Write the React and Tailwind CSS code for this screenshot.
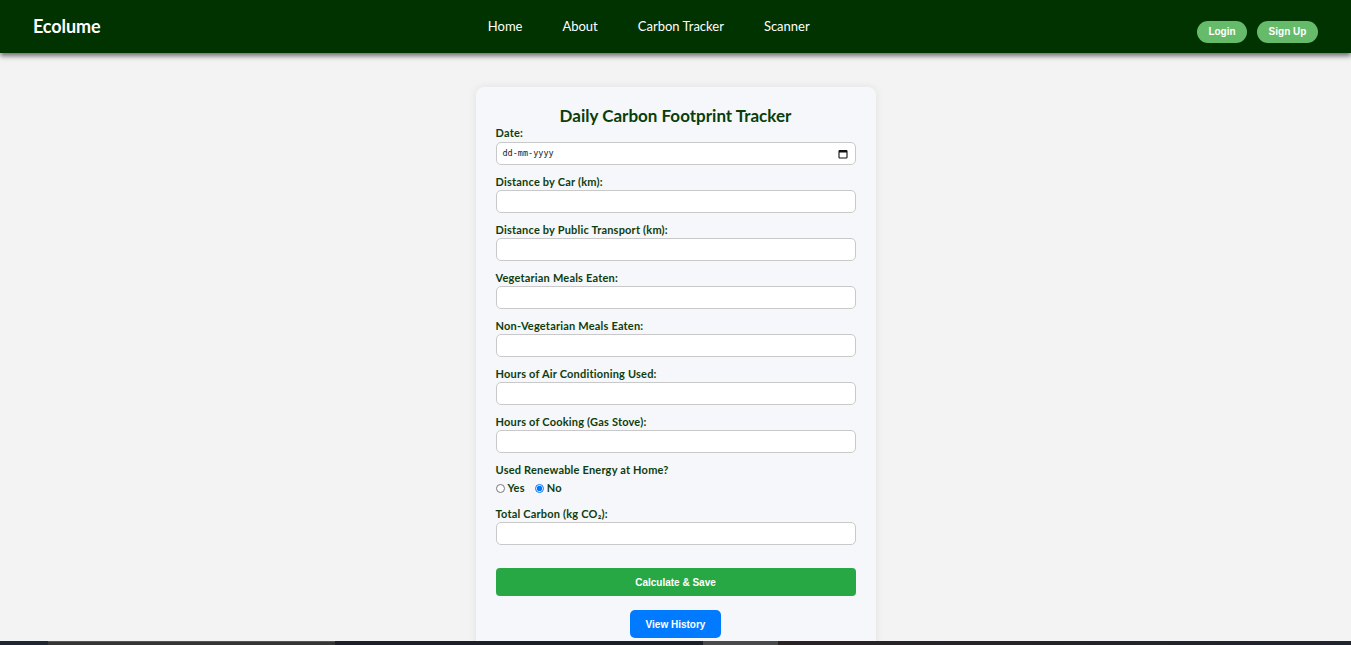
import { useState } from 'react';

const NAV_LINKS = ['Home', 'About', 'Carbon Tracker', 'Scanner'];

const FIELDS = [
  'Distance by Car (km):',
  'Distance by Public Transport (km):',
  'Vegetarian Meals Eaten:',
  'Non-Vegetarian Meals Eaten:',
  'Hours of Air Conditioning Used:',
  'Hours of Cooking (Gas Stove):',
];

const labelCls = 'block text-[11px] leading-[13px] font-bold tracking-[0.2px] text-[#0f3d0f]';
const inputCls = 'mt-[2px] block w-full h-[23px] rounded-[5px] border border-[#c9c9c9] bg-white px-2 text-[11px] outline-none';

function CalendarIcon() {
  return (
    <svg width="10" height="10" viewBox="0 0 10 10" className="text-[#111]">
      <rect x="1" y="1.5" width="8" height="7.5" rx="0.8" fill="none" stroke="currentColor" strokeWidth="1.1" />
      <rect x="1" y="1.5" width="8" height="2" fill="currentColor" />
    </svg>
  );
}

export default function App() {
  const [renewable, setRenewable] = useState('no');

  return (
    <div className="min-h-screen bg-[#f3f3f3] font-['Lato',sans-serif]">
      <nav className="h-[53px] bg-[#003300] px-[33px] flex items-center justify-between shadow-[0_3px_5px_rgba(0,0,0,0.55)] relative z-10">
        <div className="text-[18px] font-bold text-white tracking-[-0.1px]">Ecolume</div>
        <div className="flex items-center gap-10">
          {NAV_LINKS.map((l) => (
            <a key={l} href="#" className="text-[13px] text-white">{l}</a>
          ))}
        </div>
        <div className="flex items-center gap-[10px] mt-[10px] font-['Liberation_Sans',Arial,sans-serif]">
          <button className="h-[22px] w-[50px] rounded-full bg-[#66bb6a] text-[10px] font-bold text-white">Login</button>
          <button className="h-[22px] w-[61px] rounded-full bg-[#66bb6a] text-[10px] font-bold text-white">Sign Up</button>
        </div>
      </nav>

      <main className="flex justify-center pt-[34px] pb-10">
        <div className="w-[400px] rounded-[8px] bg-[#f5f7fa] px-5 pt-[19px] pb-5 shadow-[0_0_8px_rgba(0,0,0,0.08)]">
          <h2 className="text-center text-[17px] leading-[20px] font-bold text-[#0b3d0b]">Daily Carbon Footprint Tracker</h2>

          <label className={labelCls}>Date:</label>
          <div className="mt-[3px] flex h-[23px] w-full items-center justify-between rounded-[5px] border border-[#c9c9c9] bg-white pl-[6px] pr-[7px]">
            <span className="font-['DejaVu_Sans_Mono',monospace] text-[8.5px] text-[#222]">dd-mm-yyyy</span>
            <CalendarIcon />
          </div>

          {FIELDS.map((f) => (
            <div key={f} className="mt-[10px]">
              <label className={labelCls}>{f}</label>
              <input type="number" className={inputCls} />
            </div>
          ))}

          <div className="mt-[10px]">
            <label className={labelCls}>Used Renewable Energy at Home?</label>
            <div className="mt-[3px] flex h-[18px] items-center text-[11px] font-bold tracking-[0.2px] text-[#0f3d0f]">
              <label className="flex items-center">
                <input
                  type="radio"
                  name="renew"
                  checked={renewable === 'yes'}
                  onChange={() => setRenewable('yes')}
                  className="m-0 h-[9px] w-[9px] accent-[#0075ff]"
                />
                <span className="ml-[3px]">Yes</span>
              </label>
              <label className="ml-[10px] flex items-center">
                <input
                  type="radio"
                  name="renew"
                  checked={renewable === 'no'}
                  onChange={() => setRenewable('no')}
                  className="m-0 h-[9px] w-[9px] accent-[#0075ff]"
                />
                <span className="ml-[3px]">No</span>
              </label>
            </div>
          </div>

          <div className="mt-[10px]">
            <label className={labelCls}>Total Carbon (kg CO₂):</label>
            <input type="text" readOnly className={inputCls} />
          </div>

          <button className="mt-[23px] block h-[28px] w-full rounded-[4px] bg-[#28a745] font-['Liberation_Sans',Arial,sans-serif] text-[10px] font-bold text-white">
            Calculate &amp; Save
          </button>

          <div className="mt-[14px] flex justify-center">
            <button className="h-[28px] w-[91px] rounded-[5px] bg-[#007bff] font-['Liberation_Sans',Arial,sans-serif] text-[10px] font-bold text-white">
              View History
            </button>
          </div>
        </div>
      </main>

      <div className="fixed bottom-0 left-0 right-0 z-20 flex h-[4px]">
        <div className="w-[48px] bg-[#1e2633]" />
        <div className="w-[287px] bg-[#353535] border-t border-[#555]" />
        <div className="w-[368px] bg-[#1b1f2a]" />
        <div className="w-[75px] bg-[#4a4a4a]" />
        <div className="flex-1 bg-gradient-to-r from-[#2b2224] to-[#1e2430]" />
      </div>
    </div>
  );
}
